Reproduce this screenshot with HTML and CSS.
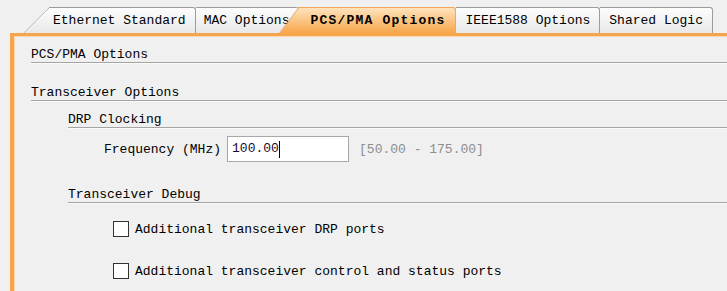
FILE: index.html
```html
<!DOCTYPE html>
<html lang="en">
<head>
    <meta charset="utf-8">
    <title>PCS/PMA Options</title>
    <link rel="stylesheet" href="styles.css">
</head>
<body>
    <div class="tabs">
        <div class="tab first">Ethernet Standard</div>
        <div class="tab mac">MAC Options</div>
        <div class="tab active">PCS/PMA Options</div>
        <div class="tab">IEEE1588 Options</div>
        <div class="tab">Shared Logic</div>
    </div>

    <div class="panel">
        <div class="title title-main">PCS/PMA Options</div>
        <div class="title title-section">Transceiver Options</div>

        <div class="group">
            <div class="title title-drp">DRP Clocking</div>
            <div class="field-row">
                <span class="label">Frequency (MHz)</span>
                <div class="text-input">100.00<span class="caret"></span></div>
                <span class="range">[50.00 - 175.00]</span>
            </div>

            <div class="title title-debug">Transceiver Debug</div>
            <div class="check-row first-check">
                <span class="checkbox"></span>
                <span>Additional transceiver DRP ports</span>
            </div>
            <div class="check-row">
                <span class="checkbox"></span>
                <span>Additional transceiver control and status ports</span>
            </div>
        </div>
    </div>
</body>
</html>
```

FILE: styles.css
```css
body {
    margin: 0;
    background-color: #f0f0f0;
    font-family: "Liberation Mono", "DejaVu Sans Mono", monospace;
    font-size: 13px;
    color: #000;
    height: 291px;
    overflow: hidden;
}
.tabs {
    display: flex;
    padding: 7px 0 0 49px;
    height: 26px;
}
.tab {
    position: relative;
    box-sizing: border-box;
    height: 26px;
    line-height: 25px;
    padding: 0 9px;
    border: 1px solid #9c9c9c;
    border-left: none;
    border-bottom: none;
    border-radius: 0 3px 0 0;
    background: linear-gradient(#fdfdfd, #e8e8e8);
    white-space: nowrap;
}
.tab.first {
    padding-left: 4px;
}
.tab.first::before {
    content: "";
    position: absolute;
    top: -1px;
    bottom: 0;
    left: -13px;
    width: 26px;
    transform: skewX(-45deg);
    border-left: 1px solid #9c9c9c;
    border-top: 1px solid #9c9c9c;
    border-radius: 3px 0 0 0;
    background: linear-gradient(#fdfdfd, #e8e8e8);
    z-index: -1;
}
.tab.mac {
    padding-left: 8px;
    padding-right: 10px;
    border-right: none;
}
.tab.active {
    z-index: 1;
    padding: 0 10px 0 11px;
    font-weight: bold;
    letter-spacing: 1.2px;
    border-color: #eea75c;
    background: linear-gradient(#fee3bd, #f8a64b);
}
.tab.active::before {
    content: "";
    position: absolute;
    top: -1px;
    bottom: 0;
    left: -10px;
    width: 20px;
    transform: skewX(-37deg);
    background: linear-gradient(#fee3bd, #f8a64b);
    border-top: 1px solid #eea75c;
    border-left: 1px solid #e9a259;
    z-index: -1;
}
.panel {
    margin-left: 10px;
    border-left: 4px solid #f6a54c;
    border-top: 3px solid #f6a54c;
    box-shadow: inset 1px 1px 0 #fcd7ac;
    padding-left: 17px;
    height: 255px;
}
.title {
    line-height: 14px;
    border-bottom: 1px solid #a4a4a4;
    box-shadow: 0 1px 0 #fafafa;
}
.title-main {
    padding-top: 12px;
}
.title-section {
    margin-top: 23px;
}
.group {
    margin-left: 37px;
}
.title-drp {
    margin-top: 12px;
}
.field-row {
    display: flex;
    align-items: center;
    margin: 7px 0 0 36px;
    height: 26px;
    padding-top: 1px;
}
.label {
    margin-right: 6px;
}
.text-input {
    box-sizing: border-box;
    width: 122px;
    height: 26px;
    line-height: 24px;
    padding-left: 4px;
    background-color: #fff;
    border: 1px solid #a8a8a8;
    color: #1a0a30;
    display: flex;
    align-items: center;
}
.caret {
    display: inline-block;
    width: 1px;
    height: 17px;
    background-color: #000;
}
.range {
    margin-left: 10px;
    color: #8e8e8e;
}
.title-debug {
    margin-top: 26px;
}
.check-row {
    display: flex;
    align-items: center;
    gap: 6px;
    margin: 26px 0 0 45px;
    height: 16px;
}
.check-row.first-check {
    margin-top: 18px;
}
.checkbox {
    box-sizing: border-box;
    width: 16px;
    height: 16px;
    border: 1px solid #333;
    background-color: #fff;
}
```
